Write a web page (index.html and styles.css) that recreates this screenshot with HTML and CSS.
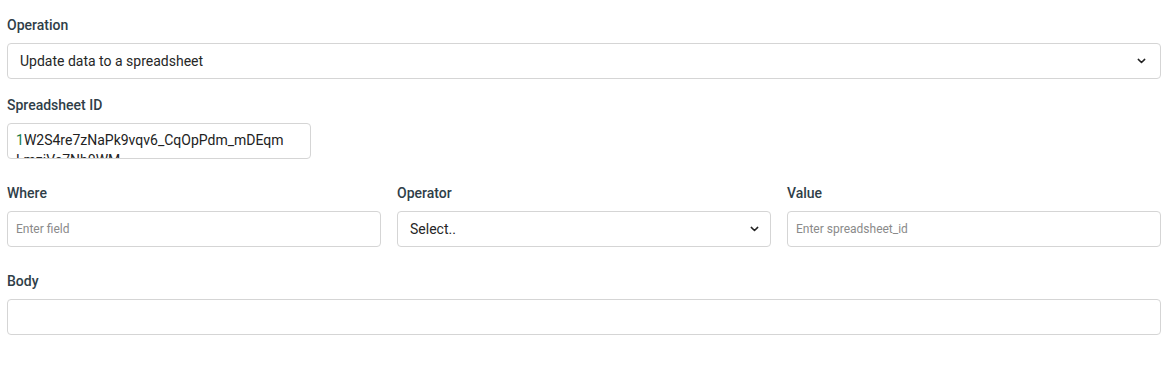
FILE: index.html
```html
<!DOCTYPE html>
<html lang="en">
<head>
    <meta charset="UTF-8">
    <meta name="viewport" content="width=device-width, initial-scale=1.0">
    <title>Spreadsheet step</title>
    <link rel="stylesheet" href="styles.css">
</head>
<body>
    <div class="form">
        <div class="group group-first">
            <label class="label">Operation</label>
            <div class="select">
                <span class="select-value">Update data to a spreadsheet</span>
                <svg class="chevron" width="9" height="6" viewBox="0 0 9 6"><path d="M1.3 1.4 4.5 4.5 7.7 1.4" fill="none" stroke="#222" stroke-width="1.5" stroke-linecap="round" stroke-linejoin="round"/></svg>
            </div>
        </div>

        <div class="group">
            <label class="label">Spreadsheet ID</label>
            <div class="code-box">
                <span class="num">1</span>W2S4re7zNaPk9vqv6_CqOpPdm_mDEqm<br>LmziVe7Nh0WM
            </div>
        </div>

        <div class="group row">
            <div class="col">
                <label class="label" for="where">Where</label>
                <input class="input" type="text" id="where" placeholder="Enter field">
            </div>
            <div class="col">
                <label class="label">Operator</label>
                <div class="select select-sm">
                    <span class="select-value">Select..</span>
                    <svg class="chevron" width="9" height="6" viewBox="0 0 9 6"><path d="M1.3 1.4 4.5 4.5 7.7 1.4" fill="none" stroke="#222" stroke-width="1.5" stroke-linecap="round" stroke-linejoin="round"/></svg>
                </div>
            </div>
            <div class="col">
                <label class="label" for="value">Value</label>
                <input class="input" type="text" id="value" placeholder="Enter spreadsheet_id">
            </div>
        </div>

        <div class="group">
            <label class="label" for="body">Body</label>
            <input class="input" type="text" id="body">
        </div>
    </div>
</body>
</html>
```

FILE: styles.css
```css
body {
    margin: 0;
    font-family: 'Roboto', 'Liberation Sans', sans-serif;
    background: #fff;
    color: #222;
}

.form {
    padding: 15px 6px 0 7px;
}

.group {
    margin-bottom: 24px;
}

.group-first {
    margin-bottom: 16px;
}

.label {
    display: block;
    font-size: 14px;
    font-weight: 500;
    line-height: 20px;
    color: #2f3e48;
    margin-bottom: 8px;
}

.select {
    display: flex;
    align-items: center;
    justify-content: space-between;
    height: 36px;
    box-sizing: border-box;
    border: 1px solid #d5d5d5;
    border-radius: 4px;
    padding: 0 14px 0 12px;
    font-size: 14px;
    color: #262626;
}

.select-sm {
    padding-right: 11px;
}

.select-value {
    line-height: 20px;
}

.chevron {
    display: block;
}

.code-box {
    width: 304px;
    height: 36px;
    box-sizing: border-box;
    border: 1px solid #d5d5d5;
    border-radius: 4px;
    padding: 6px 8px 0 8px;
    font-size: 14px;
    line-height: 20px;
    color: #222;
    overflow: hidden;
    white-space: nowrap;
}

.num {
    color: #167c4b;
}

.row {
    display: grid;
    grid-template-columns: 1fr 1fr 1fr;
    gap: 16px;
}

.input {
    display: block;
    width: 100%;
    height: 36px;
    box-sizing: border-box;
    border: 1px solid #d5d5d5;
    border-radius: 4px;
    padding: 0 8px;
    font-family: 'Roboto', 'Liberation Sans', sans-serif;
    font-size: 12px;
    color: #222;
    outline: none;
}

.input::placeholder {
    color: #8a8a8a;
}
```
